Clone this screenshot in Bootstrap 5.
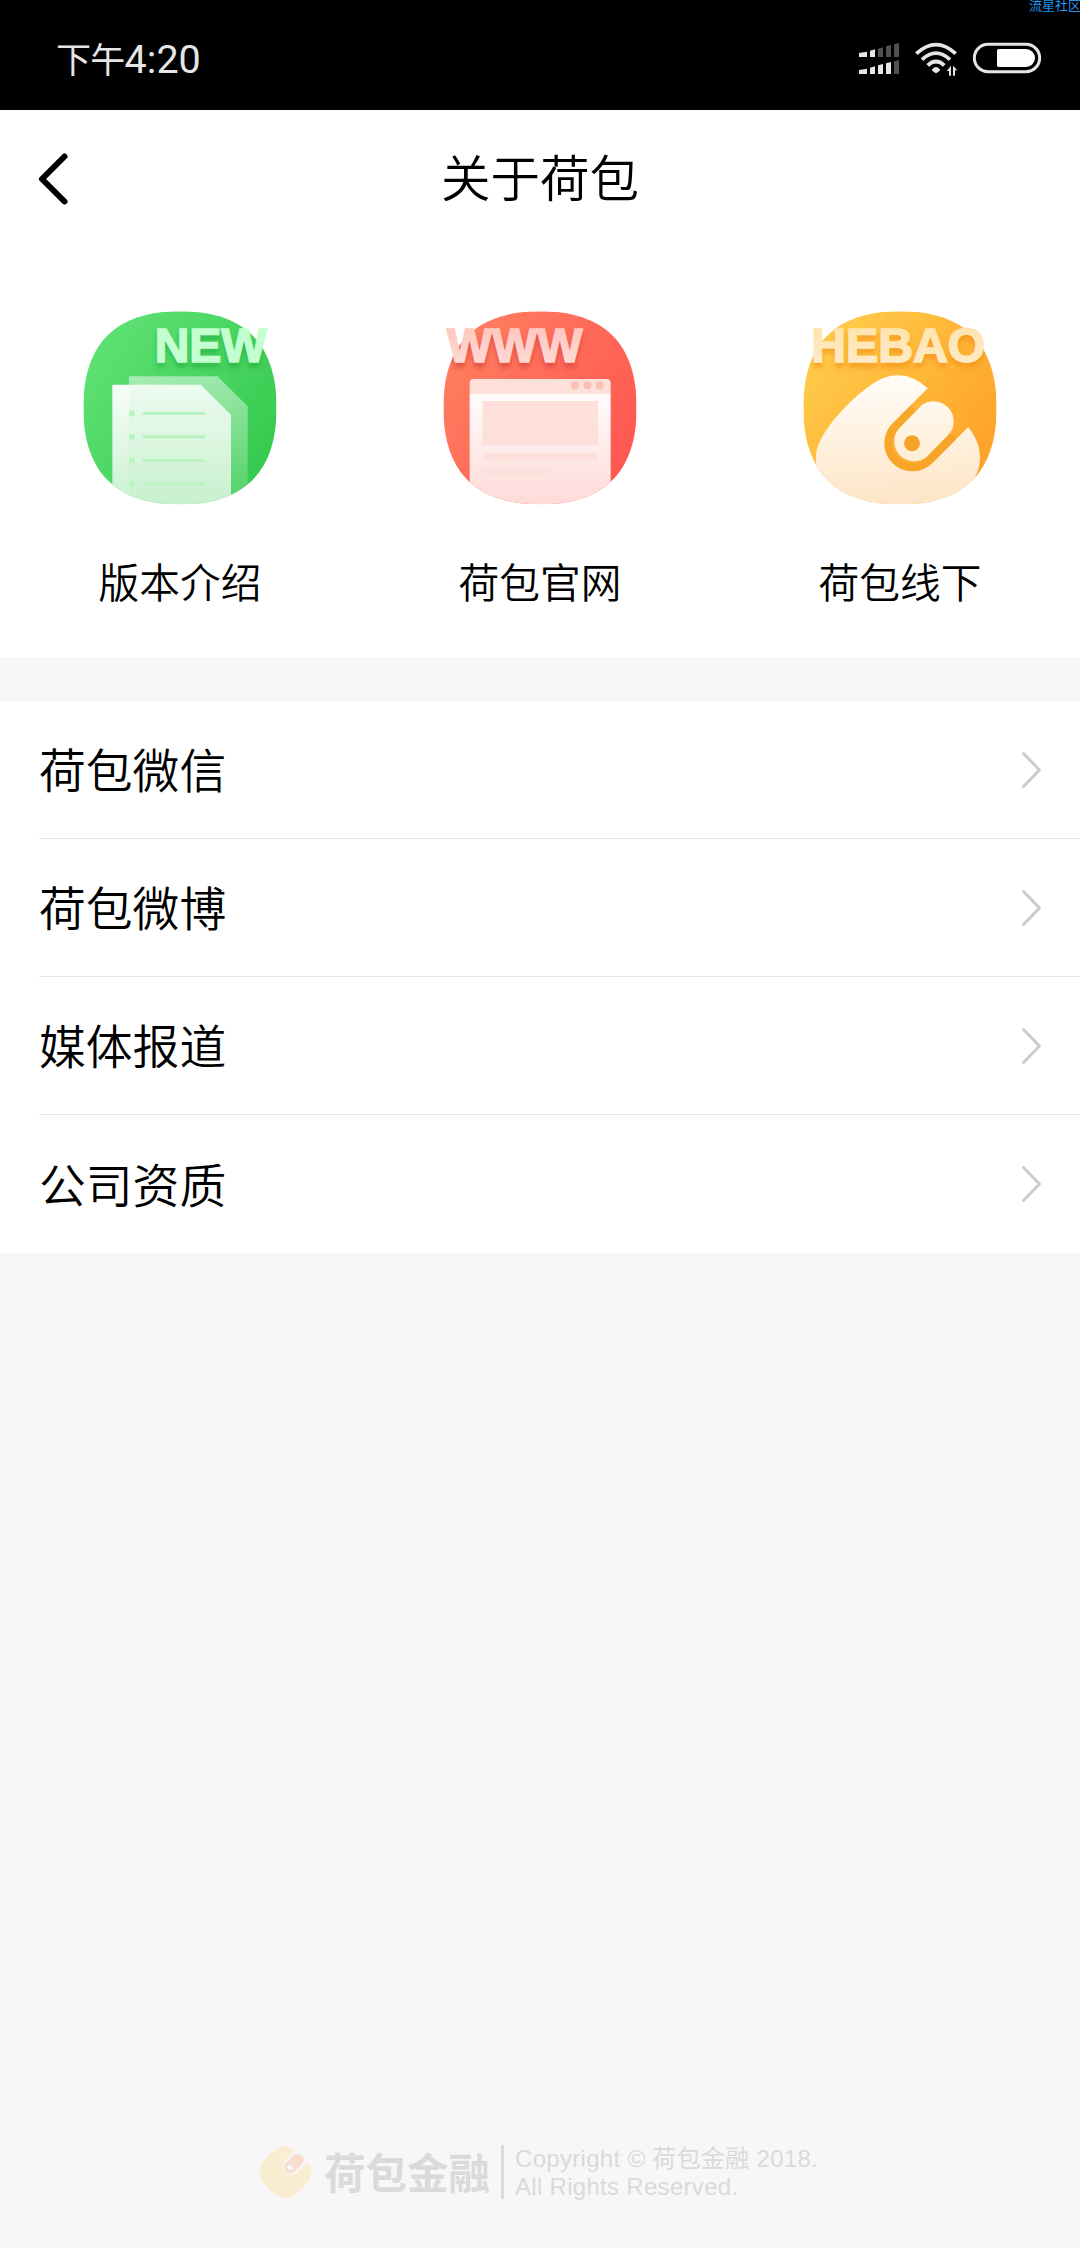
<!DOCTYPE html>
<html lang="zh-CN">
<head>
  <meta charset="UTF-8">
  <meta name="viewport" content="width=device-width, initial-scale=1.0">
  <title>关于荷包</title>
  <link href="https://cdn.jsdelivr.net/npm/bootstrap@5.3.0/dist/css/bootstrap.min.css" rel="stylesheet">
  <style>
    body {
      min-height: 2248px;
      background: #f7f7f7;
      color: #000;
      font-family: Roboto, "Noto Sans CJK SC", sans-serif;
      overflow-x: hidden;
    }
    svg { display: block; flex: none; }

    .status-bar { height: 110px; padding: 42px 38px 0 56px; background: #000; color: #e6e6e6; }
    .status-time { font-size: 39.5px; line-height: 36px; letter-spacing: 0; }
    .status-time span { font-size: 35px; letter-spacing: -.7px; }
    .status-icons { gap: 14px; }
    .watermark { top: 0; right: -1px; font-size: 13px; line-height: 12px; color: #2196f3; }

    .title-bar { height: 138px; padding-left: 36px; padding-right: 36px; }
    .title-bar h1 { padding-top: 2px; font-size: 49.5px; line-height: 72px; font-weight: 350; }
    .title-side { width: 36px; }

    .entry-grid { padding-top: 42px; height: 409px; }
    .entry-label { font-size: 40.7px; line-height: 109px; font-weight: 350; }
    .badge-word { font-family: "Liberation Sans", Arial, sans-serif; font-weight: 700; font-size: 143px; }

    .menu-list { margin-top: 44px; padding-left: 39px; }
    .menu-list .list-group-item {
      height: 138px;
      padding: 0 36px 0 0;
      font-size: 46.8px;
      line-height: 70px;
      font-weight: 350;
      color: #000;
      border-color: #e8e8e8;
      border-width: 0 0 1px;
    }
    .menu-list .list-group-item:last-child { border-bottom: 0; }
    .menu-list span { padding-top: 5px; }

    .page-foot { padding: 0 0 47px 259px; color: #dadada; }
    .brand-name { width: 164px; margin: 0 13px 0 12px; padding-top: 6px; font-size: 41.5px; line-height: 48px; font-weight: 700; white-space: nowrap; }
    .foot-rule { width: 3px; height: 54px; background: #dcdcdc; }
    .copyright { margin-left: 11px; padding-top: 2px; font: 24px/28px "Liberation Sans", "Noto Sans CJK SC", sans-serif; letter-spacing: .3px; }
  </style>
</head>
<body class="d-flex flex-column">

  <!-- Status bar -->
  <div class="status-bar d-flex justify-content-between align-items-start position-relative">
    <div class="status-time"><span>下午</span>4:20</div>
    <div class="status-icons d-flex">
      <svg width="42" height="33" viewBox="114 126 126 99" fill="#e6e6e6">
        <path d="M117 159l24-4v16h-24zM150 152l15-4v23h-15zM117 210l24-4v16h-24zM150 203l15-4v23h-15zM174 196l15-4v30h-15zM198 190l15-4v36h-15z"/>
        <path fill="#505050" d="M174 146l15-4v29h-15zM198 139l15-4v36h-15zM222 133l15-4v42h-15zM222 184l15-4v42h-15z"/>
      </svg>
      <svg width="44" height="35" viewBox="282 126 132 105" fill="none" stroke="#e6e6e6" stroke-width="11">
        <path d="M289 161Q348 107 407 161M306 179Q348 140 390 179M323 196Q348 173 373 196"/>
        <path fill="#e6e6e6" stroke="none" d="M335 209Q348 193 361 209Q360 213 348 220Q336 213 335 209zM393 197v30h-6v-14h-7zM399 227v-30l13 14h-7v16z"/>
      </svg>
      <svg width="70" height="32" viewBox="456 126 210 96">
        <rect x="463" y="133" width="196" height="82" rx="41" fill="none" stroke="#e6e6e6" stroke-width="9"/>
        <path fill="#fff" d="M536 147h82a27 27 0 0 1 0 54h-82q-5 0-5-5v-44q0-5 5-5z"/>
      </svg>
    </div>
    <div class="watermark position-absolute">流星社区</div>
  </div>

  <!-- Title -->
  <header class="title-bar bg-white d-flex align-items-center justify-content-between">
    <div class="title-side">
      <svg width="36" height="54" viewBox="0 0 36 54" fill="none" stroke="#000" stroke-width="6" stroke-linecap="round" stroke-linejoin="round"><path d="M28.500 4.500L6 27L28.500 49.500"/></svg>
    </div>
    <h1 class="mb-0">关于荷包</h1>
    <div class="title-side"></div>
  </header>

  <!-- Entries -->
  <div class="entry-grid bg-white">
    <div class="row g-0 text-center">
      <div class="col-4 d-flex flex-column align-items-center">
        <svg width="240" height="240" viewBox="0 0 720 720">
          <defs>
            <clipPath id="tile"><path d="M70 353C70 161 167 64 360 64S650 161 650 353S553 643 360 643S70 545 70 353z"/></clipPath>
            <linearGradient id="green" x1="0" y1=".1" x2="1" y2=".8"><stop offset=".1" stop-color="#5de072"/><stop offset="1" stop-color="#34c94e"/></linearGradient>
            <linearGradient id="greenPaper" x1="0" y1="0" x2="0" y2="1"><stop offset="0" stop-color="#f8fefa"/><stop offset="1" stop-color="#c9f1d0"/></linearGradient>
            <linearGradient id="greenBack" x1="0" y1="0" x2="0" y2="1"><stop offset="0" stop-color="#fff" stop-opacity=".47"/><stop offset="1" stop-color="#fff" stop-opacity=".12"/></linearGradient>
            <filter id="shadeGreen" x="-10%" y="-20%" width="120%" height="150%" color-interpolation-filters="sRGB">
              <feGaussianBlur in="SourceAlpha" stdDeviation="8"/>
              <feOffset dy="14" result="moved"/>
              <feFlood flood-color="#1fae3c" flood-opacity=".6"/>
              <feComposite operator="in" in2="moved"/>
            </filter>
          </defs>
          <g clip-path="url(#tile)">
            <path fill="url(#green)" d="M70 64h580v580H70z"/>
            <g filter="url(#shadeGreen)"><use href="#wordNew"/></g>
            <path fill="url(#greenBack)" d="M207 259h265l91 90v300H207z"/>
            <path fill="url(#greenPaper)" d="M157 284h265l91 90v270H157z"/>
            <path fill="#c3efca" opacity=".18" d="M207 284h215l91 90v270H207z"/>
            <path fill="#b9f4c0" d="M207 362h17v17h-17zM207 432h17v17h-17zM207 503h17v17h-17zM207 573h17v17h-17zM248 366h187v9H248zM248 436h187v9H248zM248 507h187v9H248zM248 577h187v9H248z"/>
          </g>
          <text id="wordNew" class="badge-word" x="284" y="216" textLength="336" lengthAdjust="spacingAndGlyphs" fill="#c4ffd0" stroke="#c4ffd0" stroke-width="5">NEW</text>
        </svg>
        <div class="entry-label">版本介绍</div>
      </div>
      <div class="col-4 d-flex flex-column align-items-center">
        <svg width="240" height="240" viewBox="0 0 720 720">
          <defs>
            <linearGradient id="red" x1="0" y1=".1" x2="1" y2=".8"><stop offset=".1" stop-color="#ff7d60"/><stop offset="1" stop-color="#fe554f"/></linearGradient>
            <linearGradient id="redPage" x1="0" y1="0" x2="0" y2="1"><stop offset="0" stop-color="#fffdfc"/><stop offset="1" stop-color="#fedad8"/></linearGradient>
            <linearGradient id="redWord" x1="0" y1="0" x2="0" y2="1"><stop offset="0" stop-color="#ffc2bb"/><stop offset="1" stop-color="#ffdeda"/></linearGradient>
            <filter id="shadeRed" x="-10%" y="-20%" width="120%" height="150%" color-interpolation-filters="sRGB">
              <feGaussianBlur in="SourceAlpha" stdDeviation="8"/>
              <feOffset dy="14" result="moved"/>
              <feFlood flood-color="#d63a33" flood-opacity=".6"/>
              <feComposite operator="in" in2="moved"/>
            </filter>
          </defs>
          <g clip-path="url(#tile)">
            <path fill="url(#red)" d="M70 64h580v580H70z"/>
            <g filter="url(#shadeRed)"><use href="#wordWww"/></g>
            <path fill="url(#redPage)" d="M149 312h423v332H149z"/>
            <path fill="#fee0da" d="M149 312v-33q0-12 12-12h399q12 0 12 12v33zM187 333h347v132H187zM187 490h347v21H187zM187 536h207v20H187z"/>
            <g fill="#f9c0b3"><circle cx="465" cy="286" r="12"/><circle cx="502" cy="286" r="12"/><circle cx="539" cy="286" r="12"/></g>
          </g>
          <text id="wordWww" class="badge-word" x="81" y="216" textLength="406" lengthAdjust="spacingAndGlyphs" fill="url(#redWord)" stroke="url(#redWord)" stroke-width="5">WWW</text>
        </svg>
        <div class="entry-label">荷包官网</div>
      </div>
      <div class="col-4 d-flex flex-column align-items-center">
        <svg width="240" height="240" viewBox="0 0 720 720">
          <defs>
            <linearGradient id="gold" x1="0" y1=".1" x2="1" y2=".8"><stop offset=".1" stop-color="#ffca48"/><stop offset="1" stop-color="#ffa027"/></linearGradient>
            <linearGradient id="purse" gradientUnits="userSpaceOnUse" x1="340" y1="255" x2="360" y2="643"><stop offset="0" stop-color="#fffdf8"/><stop offset="1" stop-color="#fee5c6"/></linearGradient>
            <linearGradient id="goldWord" x1="0" y1="0" x2="0" y2="1"><stop offset="0" stop-color="#ffe2a8"/><stop offset="1" stop-color="#ffeccc"/></linearGradient>
            <filter id="shadeGold" x="-10%" y="-20%" width="120%" height="150%" color-interpolation-filters="sRGB">
              <feGaussianBlur in="SourceAlpha" stdDeviation="8"/>
              <feOffset dy="14" result="moved"/>
              <feFlood flood-color="#f28a12" flood-opacity=".6"/>
              <feComposite operator="in" in2="moved"/>
            </filter>
          </defs>
          <g clip-path="url(#tile)">
            <path fill="url(#gold)" d="M70 64h580v580H70z"/>
            <g filter="url(#shadeGold)"><use href="#wordHebao"/></g>
            <path fill="url(#purse)" d="M443 295L338 400A84 84 0 0 0 457 519L565 411C592 447 600 476 600 503C600 530 591 552 580 570V650H108V500C108 440 190 345 272 285C332 243 388 246 443 295z"/>
            <path fill="none" stroke="#f3a024" stroke-width="24" opacity=".65" d="M400 355L346 409A72 72 0 0 0 448 511L520 439"/>
            <path fill="url(#purse)" d="M355 418A60 60 0 0 0 439 502L509 430A60 60 0 0 0 425 346z"/>
            <circle cx="396" cy="460" r="24" fill="#f3a328"/>
          </g>
          <text id="wordHebao" class="badge-word" x="94" y="216" textLength="522" lengthAdjust="spacingAndGlyphs" fill="url(#goldWord)" stroke="url(#goldWord)" stroke-width="5">HEBAO</text>
        </svg>
        <div class="entry-label">荷包线下</div>
      </div>
    </div>
  </div>

  <!-- Menu -->
  <div class="bg-white menu-list">
    <div class="list-group list-group-flush">
      <a href="#" class="list-group-item d-flex align-items-center justify-content-between"><span>荷包微信</span>
        <svg width="24" height="42" viewBox="0 0 24 42" fill="none" stroke="#ccc" stroke-width="3" stroke-linecap="round" stroke-linejoin="round"><path d="M3.500 4.500L19.500 21L3.500 37.500"/></svg></a>
      <a href="#" class="list-group-item d-flex align-items-center justify-content-between"><span>荷包微博</span>
        <svg width="24" height="42" viewBox="0 0 24 42" fill="none" stroke="#ccc" stroke-width="3" stroke-linecap="round" stroke-linejoin="round"><path d="M3.500 4.500L19.500 21L3.500 37.500"/></svg></a>
      <a href="#" class="list-group-item d-flex align-items-center justify-content-between"><span>媒体报道</span>
        <svg width="24" height="42" viewBox="0 0 24 42" fill="none" stroke="#ccc" stroke-width="3" stroke-linecap="round" stroke-linejoin="round"><path d="M3.500 4.500L19.500 21L3.500 37.500"/></svg></a>
      <a href="#" class="list-group-item d-flex align-items-center justify-content-between"><span>公司资质</span>
        <svg width="24" height="42" viewBox="0 0 24 42" fill="none" stroke="#ccc" stroke-width="3" stroke-linecap="round" stroke-linejoin="round"><path d="M3.500 4.500L19.500 21L3.500 37.500"/></svg></a>
    </div>
  </div>

  <!-- Footer -->
  <footer class="page-foot mt-auto d-flex align-items-center">
    <svg width="53" height="54" viewBox="57 48 159 162">
      <path fill="#f9edd2" d="M165 64L132 97A26 26 0 0 0 168 133L204 99C219 124 219 138 200 164Q184 184 165 198Q137 218 108 198Q89 184 73 164Q44 130 73 94Q89 75 108 61Q137 40 165 64z"/>
      <path fill="#f9ddd0" d="M136.600 101.600A19 19 0 0 0 163.400 128.400L186 106A18 18 0 0 0 160 80z"/>
      <circle cx="150" cy="115" r="8" fill="#f9f7f5"/>
    </svg>
    <div class="brand-name">荷包金融</div>
    <div class="foot-rule"></div>
    <div class="copyright">Copyright © 荷包金融 2018.<br>All Rights Reserved.</div>
  </footer>

  <script src="https://cdn.jsdelivr.net/npm/bootstrap@5.3.0/dist/js/bootstrap.bundle.min.js"></script>
</body>
</html>
